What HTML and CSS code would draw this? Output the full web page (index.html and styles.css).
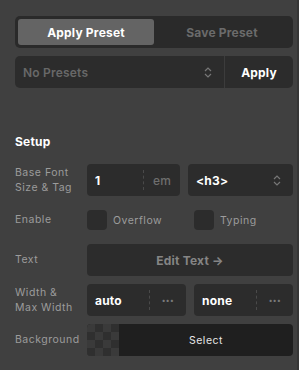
FILE: index.html
```html
<!DOCTYPE html>
<html lang="en">
<head>
  <meta charset="UTF-8" />
  <title>Text Settings</title>
  <link rel="stylesheet" href="styles.css">
</head>
<body>
  <div class="panel">
    <div class="tabs">
      <button class="tab active">Apply Preset</button>
      <button class="tab">Save Preset</button>
    </div>

    <div class="preset-row">
      <div class="preset-select">
        <span>No Presets</span>
        <svg class="chevrons" width="8" height="11" viewBox="0 0 8 11"><path d="M1 4 L4 1 L7 4 M1 7 L4 10 L7 7" fill="none" stroke="currentColor" stroke-width="1.2"/></svg>
      </div>
      <button class="preset-apply">Apply</button>
    </div>

    <h3 class="section-title">Setup</h3>

    <div class="rows">
      <div class="row">
        <label class="row-label">Base Font<br>Size &amp; Tag</label>
        <div class="controls">
          <div class="field">
            <span class="value">1</span>
            <span class="suffix">em</span>
          </div>
          <div class="field select">
            <span class="value">&lt;h3&gt;</span>
            <svg class="chevrons" width="8" height="11" viewBox="0 0 8 11"><path d="M1 4 L4 1 L7 4 M1 7 L4 10 L7 7" fill="none" stroke="currentColor" stroke-width="1.2"/></svg>
          </div>
        </div>
      </div>

      <div class="row">
        <label class="row-label">Enable</label>
        <div class="controls">
          <div class="check"><span class="box"></span>Overflow</div>
          <div class="check"><span class="box"></span>Typing</div>
        </div>
      </div>

      <div class="row">
        <label class="row-label">Text</label>
        <div class="controls">
          <button class="wide-btn">Edit Text →</button>
        </div>
      </div>

      <div class="row">
        <label class="row-label">Width &amp;<br>Max Width</label>
        <div class="controls">
          <div class="field">
            <span class="value">auto</span>
            <span class="suffix dots">•••</span>
          </div>
          <div class="field">
            <span class="value">none</span>
            <span class="suffix dots">•••</span>
          </div>
        </div>
      </div>

      <div class="row">
        <label class="row-label">Background</label>
        <div class="controls">
          <div class="color-pick">
            <span class="checker"></span>
            <span class="select-text">Select</span>
          </div>
        </div>
      </div>
    </div>
  </div>
</body>
</html>
```

FILE: styles.css
```css
* {
  margin: 0;
  padding: 0;
  box-sizing: border-box;
}

body {
  font-family: Inter, 'Noto Sans', sans-serif;
  background: #363636;
  width: 299px;
  height: 370px;
  overflow: hidden;
}

button {
  font-family: inherit;
  border: none;
  background: none;
}

.panel {
  width: 297px;
  height: 370px;
  background: #404040;
  padding: 16px 4px 0 15px;
}

.tabs {
  display: flex;
  height: 32px;
  padding: 3px;
  background: #2a2a2a;
  border-radius: 5px;
}

.tab {
  flex: 1;
  font-size: 12px;
  font-weight: 700;
  letter-spacing: 0.2px;
  color: #6b6b6b;
  border-radius: 3px;
}

.tab.active {
  background: #646464;
  color: #fff;
}

.preset-row {
  display: flex;
  height: 32px;
  margin-top: 8px;
  background: #2c2c2c;
  border-radius: 5px;
}

.preset-select {
  flex: 1;
  display: flex;
  align-items: center;
  justify-content: space-between;
  padding: 0 12px 0 8px;
  border-right: 1px solid #3c3c3c;
  font-size: 12px;
  font-weight: 600;
  letter-spacing: 0.2px;
  color: #686868;
}

.chevrons {
  color: #777;
}

.preset-apply {
  width: 68px;
  font-size: 12px;
  font-weight: 700;
  letter-spacing: 0.2px;
  color: #fff;
}

.section-title {
  margin-top: 46px;
  font-size: 12px;
  font-weight: 700;
  letter-spacing: 0.2px;
  color: #fff;
  line-height: 15px;
}

.rows {
  display: flex;
  flex-direction: column;
  gap: 8px;
  margin-top: 15px;
}

.row {
  display: flex;
  align-items: center;
  height: 32px;
}

.row-label {
  width: 72px;
  font-size: 10.5px;
  line-height: 14.5px;
  letter-spacing: 0.5px;
  color: #9c9c9c;
  padding-top: 1px;
}

.controls {
  flex: 1;
  display: flex;
  gap: 8px;
  height: 100%;
  align-items: center;
}

.field {
  flex: 1;
  height: 32px;
  display: flex;
  align-items: center;
  background: #2c2c2c;
  border-radius: 4px;
  font-size: 12px;
  font-weight: 700;
  letter-spacing: 0.2px;
}

.field .value {
  flex: 1;
  padding-left: 8px;
  color: #fff;
}

.field .suffix {
  width: 37px;
  height: 20px;
  display: flex;
  align-items: center;
  justify-content: center;
  border-left: 1px dashed #4a4a4a;
  color: #6e6e6e;
  font-weight: 500;
}

.field .suffix.dots {
  font-size: 7px;
  letter-spacing: 0.5px;
  color: #7a7a7a;
}

.field.select {
  padding-right: 12px;
}

.check {
  flex: 1;
  display: flex;
  align-items: center;
  gap: 6px;
  font-size: 10.5px;
  letter-spacing: 0.5px;
  color: #9c9c9c;
}

.check .box {
  width: 20px;
  height: 20px;
  background: #2c2c2c;
  border-radius: 4px;
}

.wide-btn {
  flex: 1;
  height: 32px;
  background: #2c2c2c;
  border-radius: 4px;
  font-size: 12px;
  font-weight: 700;
  letter-spacing: 0.2px;
  color: #858585;
}

.color-pick {
  flex: 1;
  height: 32px;
  display: flex;
  border-radius: 4px;
  overflow: hidden;
  background: #1f1f1f;
}

.checker {
  width: 32px;
  height: 32px;
  background-color: #3a3a3a;
  background-image:
    linear-gradient(45deg, #2f2f2f 25%, transparent 25%, transparent 75%, #2f2f2f 75%),
    linear-gradient(45deg, #2f2f2f 25%, transparent 25%, transparent 75%, #2f2f2f 75%);
  background-size: 16px 16px;
  background-position: 0 0, 8px 8px;
}

.select-text {
  flex: 1;
  display: flex;
  align-items: center;
  justify-content: center;
  font-size: 10.5px;
  letter-spacing: 0.5px;
  color: #e6e6e6;
}
```
